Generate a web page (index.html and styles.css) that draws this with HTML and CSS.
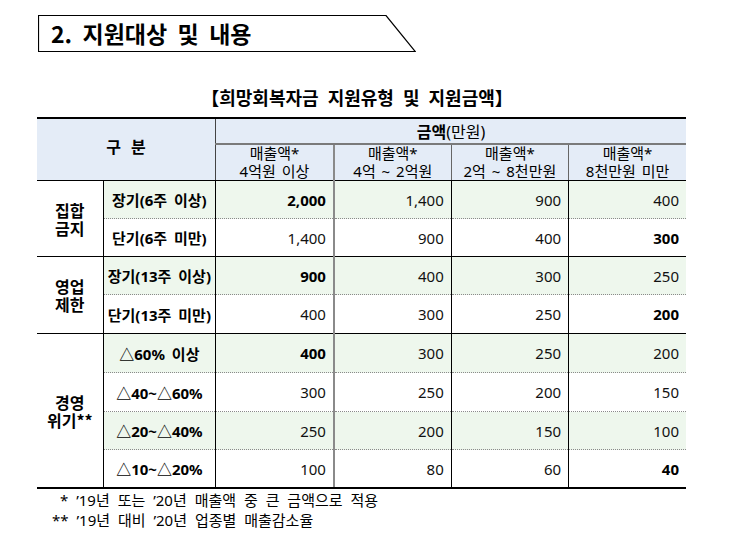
FILE: index.html
```html
<!DOCTYPE html>
<html lang="ko">
<head>
<meta charset="utf-8">
<link rel="stylesheet" href="styles.css">
</head>
<body>
<div class="page">
  <div class="title">
    <svg class="title-frame" width="378" height="37" viewBox="0 0 378 37"><polygon points="0.5,0.5 348,0.5 377.3,36.5 0.5,36.5" fill="none" stroke="#000" stroke-width="1.2"/></svg>
    <span class="title-text">2. 지원대상 및 내용</span>
  </div>
  <div class="subtitle">【희망회복자금 지원유형 및 지원금액】</div>
  <table class="grid">
    <colgroup>
      <col class="w-grp"><col class="w-lbl"><col class="w-n1"><col class="w-n"><col class="w-n"><col class="w-n">
    </colgroup>
    <thead>
      <tr class="h1">
        <th class="gubun" colspan="2" rowspan="2">구 분</th>
        <th class="amount" colspan="4"><b>금액</b><span class="unit">(만원)</span></th>
      </tr>
      <tr class="h2">
        <th class="sub s1">매출액*<br>4억원 이상</th>
        <th class="sub s2">매출액*<br>4억 ~ 2억원</th>
        <th class="sub s3">매출액*<br>2억 ~ 8천만원</th>
        <th class="sub s4">매출액*<br>8천만원 미만</th>
      </tr>
    </thead>
    <tbody>
      <tr class="g dot r38">
        <td class="grp" rowspan="2">집합<br>금지</td>
        <td class="lbl">장기(6주 이상)</td>
        <td class="n n1 b">2,000</td><td class="n">1,400</td><td class="n">900</td><td class="n nl">400</td>
      </tr>
      <tr class="end r38">
        <td class="lbl">단기(6주 미만)</td>
        <td class="n n1">1,400</td><td class="n">900</td><td class="n">400</td><td class="n nl b">300</td>
      </tr>
      <tr class="g dot r38">
        <td class="grp" rowspan="2">영업<br>제한</td>
        <td class="lbl">장기(13주 이상)</td>
        <td class="n n1 b">900</td><td class="n">400</td><td class="n">300</td><td class="n nl">250</td>
      </tr>
      <tr class="end r39">
        <td class="lbl">단기(13주 미만)</td>
        <td class="n n1">400</td><td class="n">300</td><td class="n">250</td><td class="n nl b">200</td>
      </tr>
      <tr class="g dot r39">
        <td class="grp last" rowspan="4">경영<br>위기**</td>
        <td class="lbl">△60% 이상</td>
        <td class="n n1 b">400</td><td class="n">300</td><td class="n">250</td><td class="n nl">200</td>
      </tr>
      <tr class="dot r39">
        <td class="lbl">△40~△60%</td>
        <td class="n n1">300</td><td class="n">250</td><td class="n">200</td><td class="n nl">150</td>
      </tr>
      <tr class="g dot r38">
        <td class="lbl">△20~△40%</td>
        <td class="n n1">250</td><td class="n">200</td><td class="n">150</td><td class="n nl">100</td>
      </tr>
      <tr class="final r38">
        <td class="lbl">△10~△20%</td>
        <td class="n n1">100</td><td class="n">80</td><td class="n">60</td><td class="n nl b">40</td>
      </tr>
    </tbody>
  </table>
  <div class="notes">
    <div class="fn fn1">* ’19년 또는 ’20년 매출액 중 큰 금액으로 적용</div>
    <div class="fn fn2">** ’19년 대비 ’20년 업종별 매출감소율</div>
  </div>
</div>
</body>
</html>
```
FILE: styles.css
```css
html, body {
  margin: 0;
  padding: 0;
  background: #fff;
}
body {
  font-family: "Noto Sans", "Noto Sans CJK KR", sans-serif;
  color: #000;
}
.page {
  padding-top: 15px;
}
.title {
  position: relative;
  margin-left: 38px;
  width: 378px;
  height: 37px;
}
.title-frame {
  position: absolute;
  left: 0;
  top: 0;
}
.title-text {
  display: block;
  padding-left: 13px;
  font-family: "Noto Sans CJK KR", sans-serif;
  font-weight: 700;
  font-size: 23px;
  line-height: 37px;
  word-spacing: 4px;
}
.subtitle {
  margin: 35px 0 0 37px;
  width: 640px;
  text-align: center;
  font-family: "Noto Sans CJK KR", sans-serif;
  font-weight: 700;
  font-size: 18px;
  line-height: 20px;
  word-spacing: 4px;
}
.grid {
  margin: 10px 0 0 37px;
  width: 649px;
  border-collapse: collapse;
  table-layout: fixed;
}
.w-grp { width: 66px; }
.w-lbl { width: 112px; }
.w-n1 { width: 118px; }
.w-n { width: 117px; }
th, td {
  padding: 0;
}
thead th {
  background: #e4ecf7;
  font-weight: 400;
}
.h1 th {
  border-top: 2px solid #000;
  height: 23px;
}
.gubun {
  font-weight: 700;
  font-size: 16px;
  word-spacing: 6px;
  border-right: 1px solid #444;
  border-bottom: 1px solid #000;
  padding-bottom: 8px;
}
.amount {
  font-size: 16px;
  border-bottom: 2px solid #7a7a7a;
}
.amount b {
  font-family: "Noto Sans CJK KR", sans-serif;
  font-weight: 700;
}
.unit {
  font-weight: 400;
}
.h2 th {
  height: 35px;
  font-size: 15px;
  line-height: 17.5px;
  border-bottom: 1px solid #000;
  word-spacing: 2px;
}
.s1 { border-left: 1px solid #444; }
.s2 { border-left: 2px solid #8a8a8a; }
.s3, .s4 { border-left: 1px solid #666; }
tbody td {
  font-size: 15px;
  background: #fff;
}
tbody tr.g td {
  background: #eef7ed;
}
tbody tr.g td.grp {
  background: #fff;
}
.r39 td { height: 38px; }
.r38 td { height: 37px; }
.grp {
  text-align: center;
  font-weight: 700;
  font-size: 16px;
  line-height: 18px;
  border-right: 1px solid #000;
  border-bottom: 1px solid #000;
  font-family: "Noto Sans CJK KR", sans-serif;
}
.grp.last {
  border-bottom: 2px solid #000;
}
.lbl {
  text-align: center;
  font-weight: 700;
  border-right: 1px solid #000;
  white-space: nowrap;
  word-spacing: 3px;
}
.n {
  text-align: right;
  padding-right: 7px;
  color: #111;
  border-right: 1px solid #000;
}
.n1 {
  border-right: 2px solid #8a8a8a;
}
.nl {
  border-right: none;
}
.b {
  font-weight: 700;
  color: #000;
}
tr.dot td {
  border-bottom: 1px dotted #8a8a8a;
}
tr.end td {
  border-bottom: 1px solid #000;
}
tr.final td {
  border-bottom: 2px solid #000;
}
tr td.grp {
  border-bottom: 1px solid #000;
}
tr td.grp.last {
  border-bottom: 2px solid #000;
}
.notes {
  margin-top: 1px;
}
.fn {
  font-size: 15px;
  line-height: 20px;
  word-spacing: 4px;
}
.fn1 { padding-left: 60px; }
.fn2 { padding-left: 52px; }
```
